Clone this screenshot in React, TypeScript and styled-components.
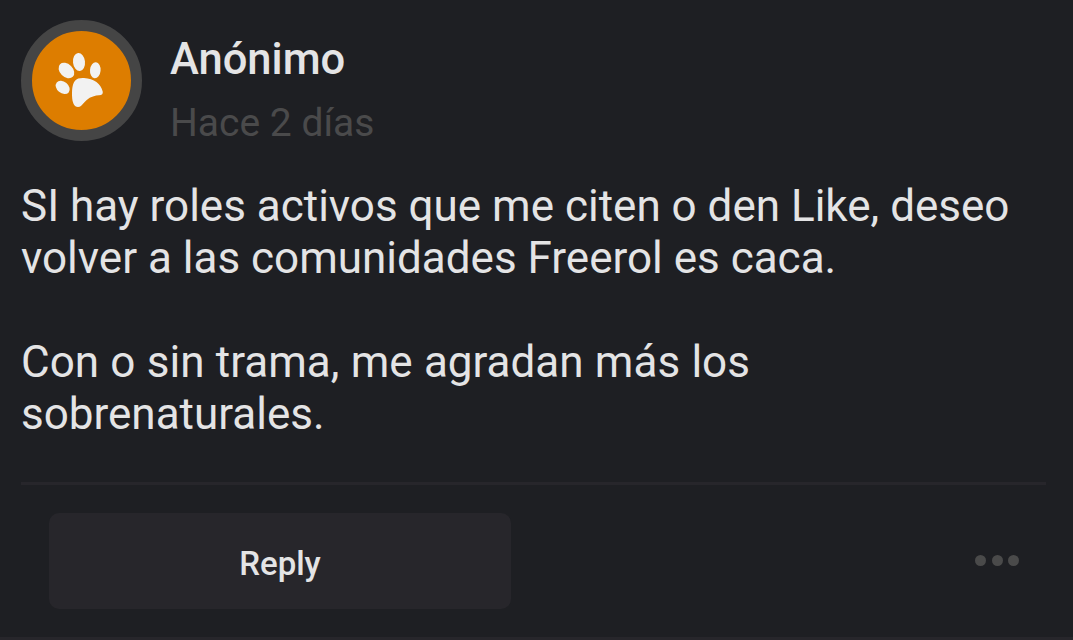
import React from 'react';
import styled, { createGlobalStyle } from 'styled-components';

const GlobalStyle = createGlobalStyle`
  * {
    box-sizing: border-box;
  }

  body {
    margin: 0;
    background: #1e1f23;
    font-family: Roboto, sans-serif;
  }
`;

const Post = styled.article`
  display: flex;
  flex-direction: column;
  height: 640px;
  padding: 20px 27px 0 21px;
  overflow: hidden;
  border-bottom: 3px solid #27262b;
  color: #e4e4e5;
`;

const Header = styled.header`
  display: flex;
  gap: 28px;
  height: 121px;
`;

const Avatar = styled.div`
  display: flex;
  width: 121px;
  height: 121px;
  border: 11px solid #454545;
  border-radius: 50%;
  background: #dd7d00;

  svg {
    display: block;
    width: 99px;
    height: 99px;
  }
`;

const Author = styled.div`
  padding-top: 14px;
`;

const Name = styled.h1`
  margin: 0;
  font-size: 43.5px;
  font-weight: 500;
  line-height: 52px;
`;

const Time = styled.div`
  margin-top: 12px;
  color: #4a4a4b;
  font-size: 39px;
  line-height: 50px;
`;

const Body = styled.div`
  display: flex;
  flex-direction: column;
  gap: 52px;
  margin-top: 39px;
`;

const Paragraph = styled.p<{ $spacing?: number }>`
  margin: 0;
  font-size: 44px;
  line-height: 52px;
  white-space: pre-line;
  word-spacing: ${({ $spacing = 0 }) => $spacing}px;
`;

const Footer = styled.footer`
  display: flex;
  align-items: center;
  justify-content: space-between;
  margin-top: 42px;
  padding: 28px 26px 0 28px;
  border-top: 3px solid #27262b;
`;

const ReplyButton = styled.button`
  width: 462px;
  height: 96px;
  padding: 4px 0 0;
  border: 0;
  border-radius: 10px;
  background: #27262b;
  color: #e4e4e5;
  font: 500 33px Roboto, sans-serif;
`;

const Dots = styled.div`
  display: flex;
  gap: 5.5px;
  padding: 0 1px 1px 0;

  span {
    width: 11px;
    height: 11px;
    border-radius: 50%;
    background: #4a4a4a;
  }
`;

const Paw = () => (
  <svg viewBox="32 31 99 99" fill="#f2f2f2">
    <ellipse cx="79" cy="62" rx="6" ry="9" transform="rotate(-6 79 62)" />
    <ellipse cx="95.3" cy="70.3" rx="5.3" ry="8" transform="rotate(5 95.3 70.3)" />
    <ellipse cx="66.4" cy="70.5" rx="6.5" ry="9" transform="rotate(-45 66.4 70.5)" />
    <ellipse cx="62.7" cy="87.4" rx="5.7" ry="7.8" transform="rotate(-50 62.7 87.4)" />
    <path d="M75 80.7C77 78.4 80 77.8 84 78C94 78.4 101 84 102.7 91.5C103.2 94 102 95 99 95.2C91 95.8 87.5 98.8 83.5 103.2C81.5 105.4 80.5 107 78 107C74 107 72.3 102 72.1 97C71.9 91 72 84.5 75 80.7Z" />
  </svg>
);

export const App = () => {
  return (
    <>
      <GlobalStyle />
      <Post>
        <Header>
          <Avatar>
            <Paw />
          </Avatar>
          <Author>
            <Name>Anónimo</Name>
            <Time>Hace 2 días</Time>
          </Author>
        </Header>
        <Body>
          <Paragraph>
            {'SI hay roles activos que me citen o den Like, deseo\nvolver a las comunidades Freerol es caca.'}
          </Paragraph>
          <Paragraph $spacing={0.4}>
            {'Con o sin trama, me agradan más los\nsobrenaturales.'}
          </Paragraph>
        </Body>
        <Footer>
          <ReplyButton>Reply</ReplyButton>
          <Dots>
            <span />
            <span />
            <span />
          </Dots>
        </Footer>
      </Post>
    </>
  );
};

export default App;
